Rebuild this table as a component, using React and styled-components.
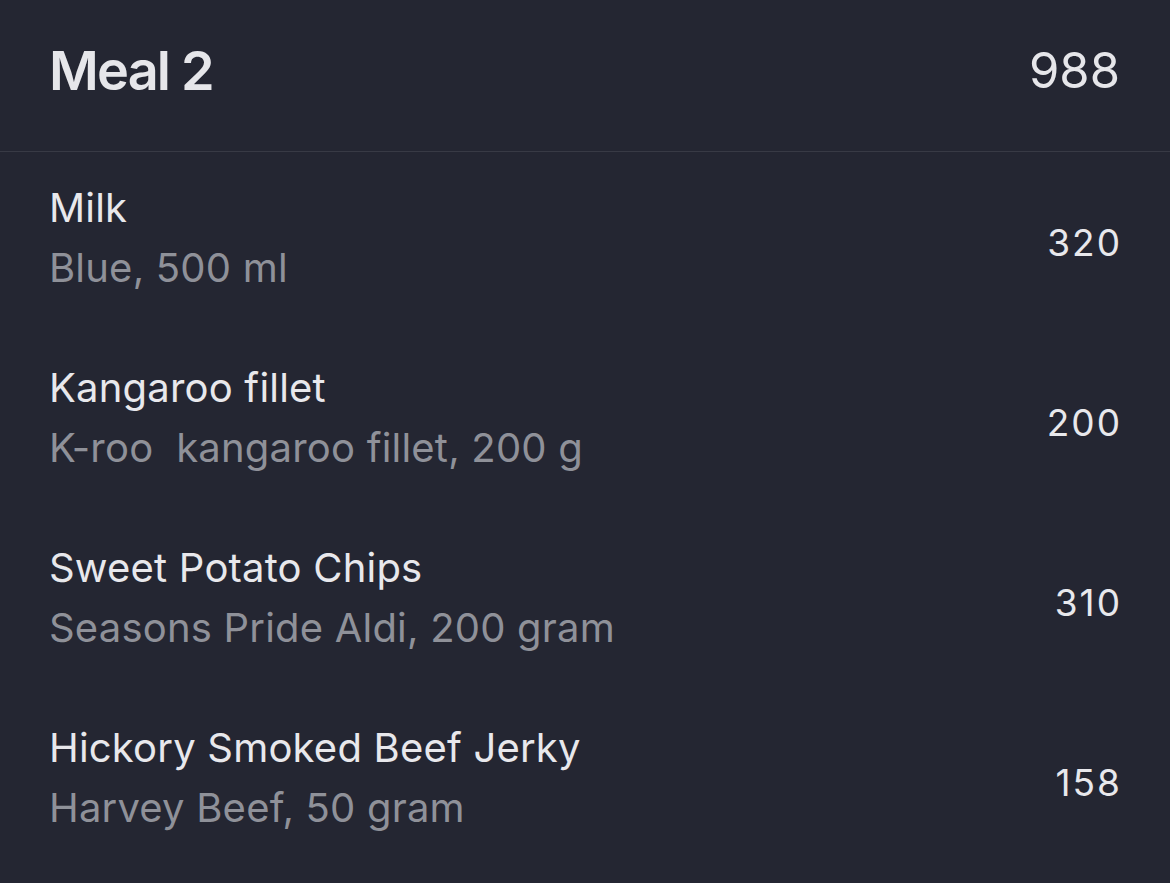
import React from "react";
import styled, { createGlobalStyle } from "styled-components";

const GlobalStyle = createGlobalStyle`
  html, body {
    margin: 0;
    padding: 0;
    background: #242632;
  }
  body {
    font-family: Inter, "Noto Sans", sans-serif;
    -webkit-font-smoothing: antialiased;
  }
`;

const items = [
  { name: "Milk", detail: "Blue, 500 ml", kcal: 320 },
  { name: "Kangaroo fillet", detail: "K-roo\u00a0 kangaroo fillet, 200 g", kcal: 200 },
  { name: "Sweet Potato Chips", detail: "Seasons Pride Aldi, 200 gram", kcal: 310 },
  { name: "Hickory Smoked Beef Jerky", detail: "Harvey Beef, 50 gram", kcal: 158 },
];

const Screen = styled.div`
  width: 1170px;
  height: 883px;
  background: #242632;
  color: #e6e6ea;
  overflow: hidden;
`;

const Header = styled.div`
  height: 152px;
  display: flex;
  align-items: center;
  justify-content: space-between;
  padding: 0 50px 10px 49px;
  border-bottom: 1px solid #383a45;
  box-sizing: border-box;
`;

const Title = styled.div`
  font-size: 54px;
  font-weight: 600;
  letter-spacing: -1.8px;
`;

const Total = styled.div`
  font-size: 49px;
  font-weight: 400;
`;

const List = styled.div`
  display: flex;
  flex-direction: column;
`;

const Row = styled.div`
  height: 180px;
  display: flex;
  align-items: center;
  justify-content: space-between;
  padding: 0 50px 0 49px;
`;

const Text = styled.div`
  display: flex;
  flex-direction: column;
  gap: 12px;
  margin-top: -9px;
`;

const Line = styled.div`
  font-size: 40px;
  line-height: 48px;
  letter-spacing: 0.2px;
  color: ${(p) => (p.muted ? "#8f9199" : "#e8e8ec")};
  white-space: nowrap;
`;

const Kcal = styled.div`
  font-size: 37px;
  letter-spacing: 2px;
  margin-right: -2px;
  color: #e8e8ec;
`;

export default function App() {
  return (
    <Screen>
      <GlobalStyle />
      <Header>
        <Title>Meal 2</Title>
        <Total>988</Total>
      </Header>
      <List>
        {items.map((item) => (
          <Row key={item.name}>
            <Text>
              <Line>{item.name}</Line>
              <Line muted>{item.detail}</Line>
            </Text>
            <Kcal>{item.kcal}</Kcal>
          </Row>
        ))}
      </List>
    </Screen>
  );
}
